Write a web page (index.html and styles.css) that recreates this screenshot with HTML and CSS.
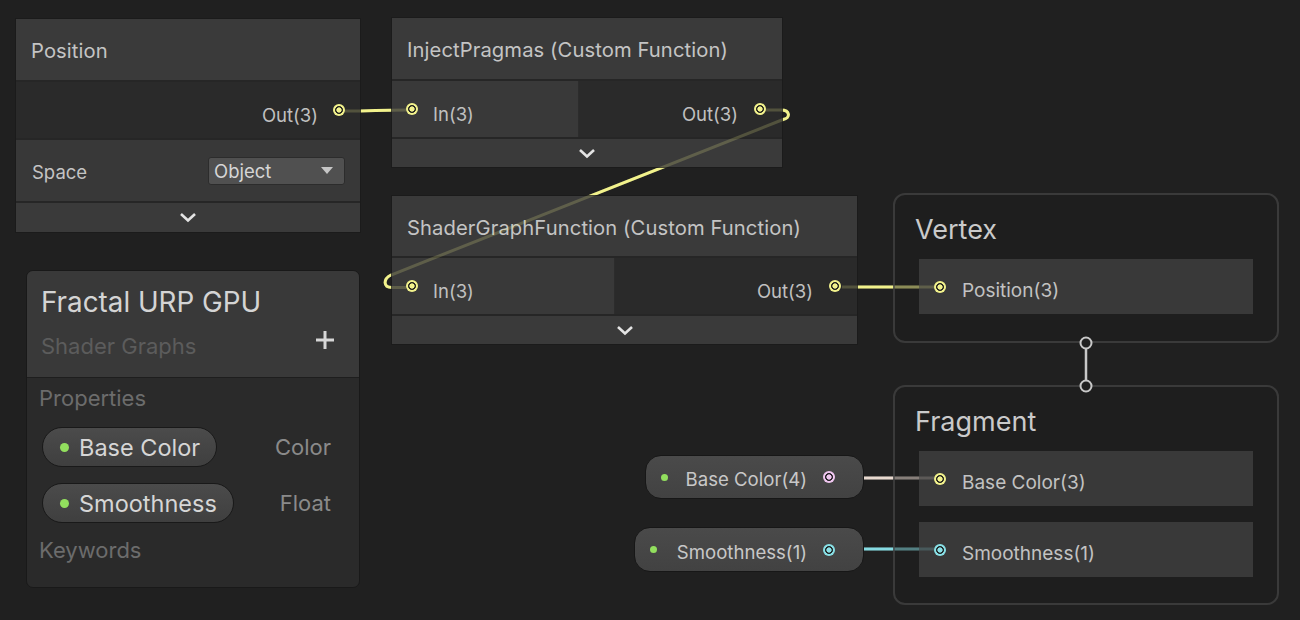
FILE: index.html
```html
<!DOCTYPE html>
<html>
<head>
<meta charset="utf-8">
<title>Shader Graph</title>
<link rel="stylesheet" href="styles.css">
</head>
<body>
<div class="canvas">
  <svg class="edges edges-under" width="1300" height="620" viewBox="0 0 1300 620">
    <g fill="none" stroke-width="3" stroke-linecap="butt">
      <path class="e-y" d="M345 111 C375 111 376 110 406 110"/>
      <path class="e-y" d="M766 110 L781 110 C790 110 791 118 783 119.5 L391 275 C383 279 383 287.5 392 287.5 L406 287.5"/>
      <path class="e-y" d="M842 287 L934 287"/>
      <path class="e-p" d="M864 478 L934 478"/>
      <path class="e-c" d="M864 549 L934 549"/>
    </g>
  </svg>

  <div class="node node-position">
    <div class="node-title">Position</div>
    <div class="node-ports">
      <div class="port-out"><span class="plabel">Out(3)</span><span class="dot dot-y"></span></div>
    </div>
    <div class="node-controls">
      <span class="ctrl-label">Space</span>
      <div class="dropdown"><span>Object</span><span class="caret"></span></div>
    </div>
    <div class="node-collapse collapse-29">
      <svg width="18" height="11" viewBox="0 0 18 11"><polyline points="2,2 9,8.5 16,2" fill="none" stroke="#e4e4e4" stroke-width="2.6"/></svg>
    </div>
  </div>

  <div class="node node-inject">
    <div class="node-title">InjectPragmas (Custom Function)</div>
    <div class="node-ports">
      <div class="port-in"><span class="dot dot-y"></span><span class="plabel">In(3)</span></div>
      <div class="port-out"><span class="plabel">Out(3)</span><span class="dot dot-y"></span></div>
    </div>
    <div class="node-collapse">
      <svg width="18" height="11" viewBox="0 0 18 11"><polyline points="2,2 9,8.5 16,2" fill="none" stroke="#e4e4e4" stroke-width="2.6"/></svg>
    </div>
  </div>

  <div class="node node-sgf">
    <div class="node-title">ShaderGraphFunction (Custom Function)</div>
    <div class="node-ports">
      <div class="port-in"><span class="dot dot-y"></span><span class="plabel">In(3)</span></div>
      <div class="port-out"><span class="plabel">Out(3)</span><span class="dot dot-y"></span></div>
    </div>
    <div class="node-collapse">
      <svg width="18" height="11" viewBox="0 0 18 11"><polyline points="2,2 9,8.5 16,2" fill="none" stroke="#e4e4e4" stroke-width="2.6"/></svg>
    </div>
  </div>

  <div class="blackboard">
    <div class="bb-header">
      <div class="bb-title">Fractal URP GPU</div>
      <div class="bb-sub">
        <span>Shader Graphs</span>
        <svg class="bb-plus" width="20" height="20" viewBox="0 0 20 20"><path d="M10 1 V19 M1 10 H19" stroke="#d6d6d6" stroke-width="3"/></svg>
      </div>
    </div>
    <div class="bb-body">
      <div class="bb-section">Properties</div>
      <div class="bb-prop">
        <div class="bb-pill"><span class="gdot"></span><span>Base Color</span></div>
        <span class="bb-type">Color</span>
      </div>
      <div class="bb-prop">
        <div class="bb-pill"><span class="gdot"></span><span>Smoothness</span></div>
        <span class="bb-type">Float</span>
      </div>
      <div class="bb-section bb-keywords">Keywords</div>
    </div>
  </div>

  <div class="context ctx-vertex">
    <div class="ctx-title">Vertex</div>
    <div class="slot"><span class="dot dot-y"></span><span class="slabel">Position(3)</span></div>
  </div>

  <div class="context ctx-fragment">
    <div class="ctx-title">Fragment</div>
    <div class="slot"><span class="dot dot-y"></span><span class="slabel">Base Color(3)</span></div>
    <div class="slot"><span class="dot dot-c"></span><span class="slabel">Smoothness(1)</span></div>
  </div>

  <div class="propnode prop-base">
    <span class="gdot gdot-sm"></span>
    <span class="prop-label">Base Color(4)</span>
    <span class="dot dot-p"></span>
  </div>
  <div class="propnode prop-smooth">
    <span class="gdot gdot-sm"></span>
    <span class="prop-label">Smoothness(1)</span>
    <span class="dot dot-c"></span>
  </div>

  <svg class="edges edges-over" width="1300" height="620" viewBox="0 0 1300 620">
    <g fill="none" stroke-width="3" stroke-linecap="butt">
      <path class="e-y" d="M345 111 C375 111 376 110 406 110"/>
      <path class="e-y" d="M766 110 L781 110 C790 110 791 118 783 119.5 L391 275 C383 279 383 287.5 392 287.5 L406 287.5"/>
      <path class="e-y" d="M842 287 L934 287"/>
      <path class="e-p" d="M864 478 L934 478"/>
      <path class="e-c" d="M864 549 L934 549"/>
    </g>
  </svg>

  <svg class="ctx-link" width="20" height="60" viewBox="0 0 20 60">
    <line x1="10" y1="10" x2="10" y2="50" stroke="#c8c8c8" stroke-width="2.5"/>
    <circle cx="10" cy="7" r="5.5" fill="#1f1f1f" stroke="#c8c8c8" stroke-width="2"/>
    <circle cx="10" cy="50" r="5.5" fill="#1f1f1f" stroke="#c8c8c8" stroke-width="2"/>
  </svg>
</div>
</body>
</html>
```

FILE: styles.css
```css
html, body {
  margin: 0;
  padding: 0;
  background: #202020;
}

.canvas {
  position: relative;
  width: 1300px;
  height: 620px;
  overflow: hidden;
  background: #202020;
  font-family: "Inter", "Noto Sans", sans-serif;
  color: #c4c4c4;
  white-space: nowrap;
}

/* ---------- edges ---------- */
.edges {
  position: absolute;
  left: 0;
  top: 0;
  pointer-events: none;
}
.edges-under { z-index: 1; }
.edges-over { z-index: 5; opacity: 0.2; }
.e-y { stroke: #f2f28c; }
.e-p { stroke: #e8d9cf; }
.e-c { stroke: #86dbe2; }

/* ---------- ports ---------- */
.dot {
  flex: none;
  width: 12px;
  height: 12px;
  border-radius: 50%;
}
.dot-y { background: radial-gradient(circle closest-side, #f2f28c 0 40%, #2a2a22 46% 62%, #f2f28c 68%); }
.dot-p { background: radial-gradient(circle closest-side, #efc6ef 0 40%, #2a242a 46% 62%, #efc6ef 68%); }
.dot-c { background: radial-gradient(circle closest-side, #88e0e6 0 40%, #222a2a 46% 62%, #88e0e6 68%); }

/* ---------- nodes ---------- */
.node {
  position: absolute;
  z-index: 2;
  display: flex;
  flex-direction: column;
  background: #393939;
  box-shadow: 0 0 0 1px #1b1b1b;
}
.node-title {
  box-sizing: border-box;
  height: 63px;
  display: flex;
  align-items: center;
  padding-left: 15px;
  padding-top: 2px;
  font-size: 20.2px;
  letter-spacing: 0.1px;
  color: #c4c4c4;
  border-bottom: 2px solid #262626;
  background: #3a3a3a;
}
.node-ports {
  box-sizing: border-box;
  height: 58px;
  display: flex;
  border-bottom: 2px solid #262626;
}
.port-in {
  box-sizing: border-box;
  display: flex;
  align-items: center;
  gap: 15px;
  padding-left: 14px;
  background: #393939;
  border-right: 1px solid #2c2c2c;
}
.port-out {
  flex: 1;
  display: flex;
  align-items: center;
  justify-content: flex-end;
  gap: 16px;
  padding-right: 16px;
  background: #2a2a2a;
}
.plabel {
  font-size: 18.5px;
  color: #c0c0c0;
  padding-top: 9px;
}
.node-controls {
  box-sizing: border-box;
  height: 63px;
  display: flex;
  align-items: center;
  justify-content: space-between;
  padding: 0 15px 0 16px;
  background: #383838;
  border-bottom: 2px solid #262626;
}
.ctrl-label {
  font-size: 18.5px;
  color: #c4c4c4;
  padding-top: 2px;
}
.dropdown {
  box-sizing: border-box;
  width: 137px;
  height: 28px;
  display: flex;
  align-items: center;
  justify-content: space-between;
  padding: 0 11px 0 5px;
  background: #505050;
  border: 1px solid #2c2c2c;
  border-radius: 3px;
  font-size: 18.5px;
  color: #d6d6d6;
}
.caret {
  width: 0;
  height: 0;
  border-left: 6px solid transparent;
  border-right: 6px solid transparent;
  border-top: 7px solid #c6c6c6;
}
.node-collapse {
  height: 28px;
  display: flex;
  align-items: center;
  justify-content: center;
  background: #3a3a3a;
}
.collapse-29 { height: 29px; }

.node-position { left: 16px; top: 19px; width: 344px; }
.node-position .port-out { padding-right: 15px; gap: 15px; }

.node-inject { left: 392px; top: 18px; width: 390px; }
.node-inject .port-in { width: 187px; }

.node-sgf { left: 392px; top: 196px; width: 465px; }
.node-sgf .node-title { height: 62px; }
.node-sgf .port-in { width: 223px; }

/* ---------- blackboard ---------- */
.blackboard {
  position: absolute;
  z-index: 2;
  left: 26px;
  top: 270px;
  width: 334px;
  height: 318px;
  box-sizing: border-box;
  border: 1px solid #191919;
  border-radius: 7px;
  background: #2a2a2a;
  overflow: hidden;
  display: flex;
  flex-direction: column;
}
.bb-header {
  box-sizing: border-box;
  height: 107px;
  padding: 15px 24px 0 14px;
  background: #393939;
  border-bottom: 1px solid #1e1e1e;
}
.bb-title {
  font-size: 27.8px;
  line-height: 32px;
  color: #d4d4d4;
}
.bb-sub {
  display: flex;
  align-items: center;
  justify-content: space-between;
  margin-top: 12px;
  font-size: 22px;
  line-height: 28px;
  color: #5c5c5c;
}
.bb-plus { margin-bottom: 12px; }
.bb-body {
  display: flex;
  flex-direction: column;
  padding: 7px 28px 0 12px;
}
.bb-section {
  font-size: 22px;
  line-height: 26px;
  color: #6c6c6c;
}
.bb-prop {
  display: flex;
  align-items: center;
  justify-content: space-between;
  margin-left: 3px;
}
.bb-section + .bb-prop { margin-top: 16px; }
.bb-prop + .bb-prop { margin-top: 16px; }
.bb-keywords { margin-top: 14px; }
.bb-pill {
  box-sizing: border-box;
  height: 40px;
  display: flex;
  align-items: center;
  gap: 10px;
  padding: 0 16px 0 17px;
  border: 1px solid #191919;
  border-radius: 20px;
  background: linear-gradient(#4b4b4b, #3f3f3f);
  font-size: 23.5px;
  color: #d6d6d6;
}
.gdot {
  flex: none;
  width: 9px;
  height: 9px;
  border-radius: 50%;
  background: #92df5e;
}
.gdot-sm { width: 7px; height: 7px; }
.bb-type {
  font-size: 22px;
  color: #8a8a8a;
}

/* ---------- master contexts ---------- */
.context {
  position: absolute;
  z-index: 2;
  left: 893px;
  width: 386px;
  box-sizing: border-box;
  border: 2px solid #3a3a3a;
  border-radius: 12px;
  background: rgba(30, 30, 30, 0.6);
  padding: 18px 24px 0 24px;
  display: flex;
  flex-direction: column;
  gap: 16px;
}
.ctx-vertex { top: 193px; height: 150px; }
.ctx-fragment { top: 385px; height: 220px; }
.ctx-title {
  font-size: 27px;
  line-height: 32px;
  color: #cacaca;
  margin-left: -4px;
  margin-bottom: -3px;
  padding-top: 1px;
}
.slot {
  box-sizing: border-box;
  height: 55px;
  display: flex;
  align-items: center;
  gap: 16px;
  padding-left: 15px;
  background: #393939;
}
.slabel {
  font-size: 19px;
  color: #c2c2c2;
  padding-top: 7px;
}
.ctx-link {
  position: absolute;
  z-index: 6;
  left: 1076px;
  top: 336px;
}

/* ---------- property nodes ---------- */
.propnode {
  position: absolute;
  z-index: 2;
  box-sizing: border-box;
  display: flex;
  align-items: center;
  padding: 0 28px 0 15px;
  border: 1px solid #171717;
  border-radius: 16px;
  background: linear-gradient(#4a4a4a, #424242);
}
.prop-label {
  flex: 1;
  text-align: right;
  font-size: 18.6px;
  color: #c8c8c8;
  padding-top: 4px;
  margin-right: 16px;
}
.prop-base { left: 645px; top: 455px; width: 219px; height: 44px; }
.prop-smooth { left: 634px; top: 527px; width: 230px; height: 45px; }
```
